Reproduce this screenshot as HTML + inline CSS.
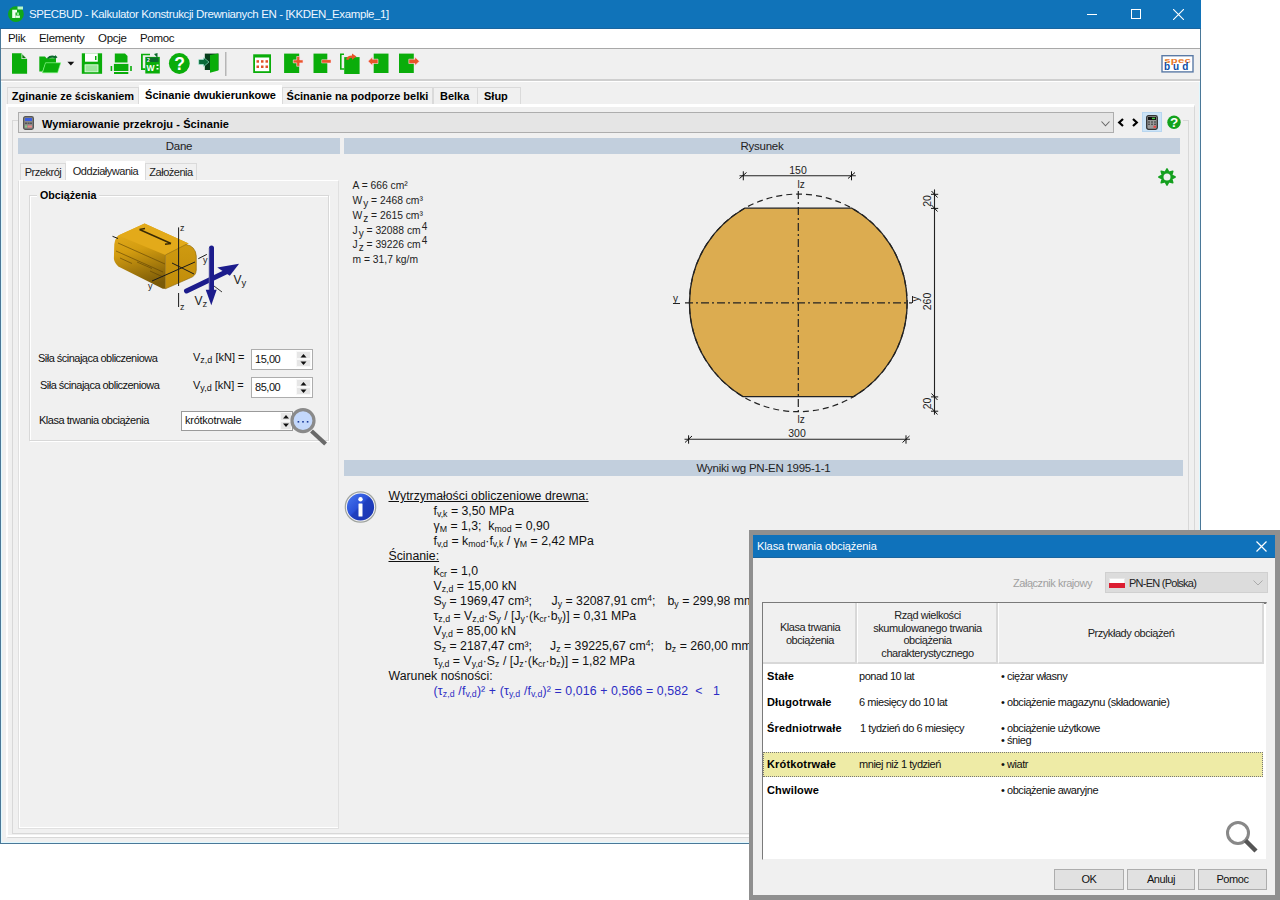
<!DOCTYPE html>
<html><head><meta charset="utf-8">
<style>
*{margin:0;padding:0;box-sizing:border-box}
html,body{width:1280px;height:900px;overflow:hidden;background:#fff;font-family:"Liberation Sans",sans-serif;color:#000}
.a{position:absolute}
.tx{position:absolute;white-space:nowrap}
#win{left:0;top:0;width:1201px;height:844px;background:#f0f0f0;border:1px solid #4a7898;border-top:none;box-shadow:inset 1px 0 0 #dff8ff,inset -1px 0 0 #dff8ff,inset 0 -1px 0 #dff8ff}
#title{left:0;top:0;width:1201px;height:29px;background:#1073b9;border-bottom:1px solid #1a659f;color:#fff}
#menu{left:1px;top:29px;width:1199px;height:20px;background:#fff;border-bottom:1px solid #a8a8a8}
#tb{left:1px;top:49px;width:1199px;height:32px;background:#f0f0f0;border-bottom:2px solid #cfcfcf}
.hbar{position:absolute;background:#c2cfdd;height:16px;font-size:11.5px;letter-spacing:-0.25px;color:#222;text-align:center;line-height:16px}
.tab{position:absolute;font-weight:bold;font-size:11px;background:#f0f0f0;border:1px solid #dadada;border-bottom:none;line-height:17px;text-align:center;color:#000;white-space:nowrap}
.stab{position:absolute;font-size:11px;letter-spacing:-0.47px;background:#f0f0f0;border:1px solid #dadada;border-bottom:none;line-height:16px;text-align:center;color:#222;white-space:nowrap}
.res{font-size:12.3px;color:#111;line-height:15px}
.res sub{font-size:8.8px;vertical-align:baseline;position:relative;top:2px}
.res sup{font-size:8.5px;vertical-align:baseline;position:relative;top:-4px}
.btn{position:absolute;background:#e1e1e1;border:1px solid #adadad;font-size:11px;letter-spacing:-0.4px;text-align:center;line-height:18px;color:#111}
.dt{font-size:11px;color:#111;letter-spacing:-0.45px}
.db{font-size:11px;font-weight:bold;color:#000;letter-spacing:0.15px}
</style></head><body>
<div id="win" class="a"></div>
<div id="title" class="a">
  <svg class="a" style="left:6px;top:4px" width="20" height="20" viewBox="6 4 20 20"><circle cx="15.9" cy="14.1" r="7.9" fill="#10a818"/><path d="M12.2 9.7 H17 V12.5 H15.5 V17.9 H12.2 Z" fill="#f0fff0"/><path d="M15.5 15.5 H19.9 V17.9 H15.5 Z" fill="#e8ffe8"/><rect x="16.8" y="12.5" width="2.2" height="2.5" fill="#8ef08e"/><rect x="17.5" y="6.5" width="5.5" height="3" fill="#b8f8c8"/></svg>
  <div class="tx" style="left:29px;top:8px;font-size:11.5px;letter-spacing:-0.38px;color:#eef6ff">SPECBUD - Kalkulator Konstrukcji Drewnianych EN - [KKDEN_Example_1]</div>
  <div class="a" style="left:1087px;top:14px;width:10px;height:1px;background:#fff"></div>
  <div class="a" style="left:1131px;top:9px;width:10px;height:10px;border:1px solid #fff"></div>
  <svg class="a" style="left:1173px;top:9px" width="11" height="11"><path d="M0 0L11 11M11 0L0 11" stroke="#fff" stroke-width="1.1"/></svg>
</div>
<div id="menu" class="a">
  <div class="tx" style="left:7px;top:3px;font-size:11.5px;letter-spacing:-0.3px;color:#111">Plik</div>
  <div class="tx" style="left:38px;top:3px;font-size:11.5px;letter-spacing:-0.3px;color:#111">Elementy</div>
  <div class="tx" style="left:97px;top:3px;font-size:11.5px;letter-spacing:-0.3px;color:#111">Opcje</div>
  <div class="tx" style="left:139px;top:3px;font-size:11.5px;letter-spacing:-0.3px;color:#111">Pomoc</div>
</div>
<div id="tb" class="a"></div>
<!-- TOOLBAR -->
<svg class="a" style="left:0;top:0" width="440" height="82" viewBox="0 0 440 82">
<g fill="#0aad0a">
<!-- new doc -->
<path d="M12 53.3 H21.5 L27.1 59 V73.8 H12 Z"/>
<path d="M21.5 53.3 V59 H27.1 Z" fill="#f0f0f0"/>
<path d="M22.3 54.5 L26 58.2 H22.3 Z" fill="#0a7a0a"/>
<!-- open folder -->
<path d="M39.3 56.6 H45 L46.5 58.2 H56 V62.8 H45.5 L42.4 71.5 H39.3 Z"/>
<path d="M45.5 62.8 H60.7 L57.6 72.8 H42.4 Z" stroke="#7cfc7c" stroke-width="0.6"/>
<path d="M47 58 Q50 54.5 55 56 L55 55 L57.5 57.3 L54.5 59.2 L54.8 58 Q51 57 48 59 Z" fill="#0a6a2a"/>
<!-- floppy -->
<path d="M81.8 53.3 H102.1 V73.8 H81.8 Z"/>
<rect x="85" y="53.3" width="12.8" height="8.4" fill="#fff"/>
<rect x="95" y="56" width="1.5" height="4" fill="#0aad0a"/>
<rect x="85" y="64.8" width="13" height="7" fill="#9be59b" stroke="#eaffea" stroke-width="0.8"/>
<!-- printer -->
<path d="M114.8 53.6 H125 L127.5 56 V62.5 H114.8 Z"/>
<rect x="113.9" y="63.9" width="14.5" height="7.1"/>
<rect x="110.6" y="66" width="1.6" height="5"/>
<rect x="130.2" y="66" width="1.6" height="5"/>
<rect x="114" y="72" width="14.3" height="2"/>
<!-- word -->
<path d="M141 53.8 H150 V55.3 H142.8 V68.3 H145.3 V70 H141 Z"/>
<rect x="145.3" y="56.9" width="14.5" height="16.6"/>
<rect x="146.5" y="57.5" width="12" height="4.5" fill="#0a6a2a"/>
<path d="M154 54 L157.5 53 V58 Z" fill="#0a6a2a"/>
<text x="147" y="61.5" font-family="Liberation Sans" font-size="5" fill="#fff" font-weight="bold">2</text>
<text x="146.6" y="70.5" font-family="Liberation Sans" font-size="8.5" fill="#fff" font-weight="bold">W</text>
<rect x="156.5" y="64.5" width="2" height="1.5" fill="#fff"/><rect x="156.5" y="68" width="2" height="1.5" fill="#fff"/>
<!-- help -->
<circle cx="179.3" cy="63.5" r="10.4"/>
<text x="179.5" y="70" font-family="Liberation Sans" font-size="17.5" font-weight="bold" fill="#fff" text-anchor="middle">?</text>
<!-- exit -->
<rect x="204.8" y="53.6" width="13.6" height="16.4" fill="#053d1a"/>
<path d="M210 55 L218.4 53.6 V70.5 L210 72.8 Z"/>
<path d="M198.7 59.5 H203.5 V57.4 L209 62 L203.5 66.7 V64.5 H198.7 Z" fill="#0a6a3a" stroke="#bfe" stroke-width="0.5"/>
</g>
<rect x="225.2" y="52" width="1.2" height="24" fill="#a8a8a8"/>
<g fill="#0aad0a">
<!-- calendar -->
<rect x="253.2" y="54.3" width="17.8" height="18.7"/>
<rect x="255" y="57.5" width="14.2" height="13.7" fill="#fff"/>
<g fill="#e0522a"><rect x="256.5" y="60.2" width="2.5" height="2.5"/><rect x="261" y="60.2" width="2.5" height="2.5"/><rect x="265.5" y="60.2" width="2.5" height="2.5"/><rect x="256.5" y="65.5" width="2.5" height="2.5"/><rect x="261" y="65.5" width="2.5" height="2.5"/><rect x="265.5" y="65.5" width="2.5" height="2.5"/></g>
<!-- doc+ -->
<rect x="284.1" y="53.6" width="15.1" height="19.4"/>
<path d="M296.7 56.5 H299.7 V59.9 H303 V62.9 H299.7 V66.3 H296.7 V62.9 H293.3 V59.9 H296.7 Z" fill="#e8562a" stroke="#fde" stroke-width="0.6"/>
<!-- doc- -->
<rect x="313.5" y="53.6" width="13.8" height="19.4"/>
<rect x="321.8" y="59.8" width="9.2" height="3.2" fill="#e8562a" stroke="#fde" stroke-width="0.5"/>
<!-- copy -->
<path d="M340 53.6 H344 V55 H341.6 V68.3 H344.2 V69.8 H340 Z"/>
<rect x="344.2" y="57.1" width="15.4" height="16.9"/>
<path d="M346 59.5 Q347 55.5 352 55.5 V53.4 L356.5 56.6 L352 59.8 V57.8 Q349 57.8 348.3 60 Z" fill="#e8562a"/>
<!-- arrow left -->
<rect x="373.7" y="53.6" width="14.8" height="19.4"/>
<path d="M368 61.3 L372.5 57 V59.2 H378 V63.5 H372.5 V65.6 Z" fill="#e8562a" stroke="#fde" stroke-width="0.6"/>
<!-- arrow right -->
<rect x="399" y="53.6" width="14.8" height="19.4"/>
<path d="M419.4 61.3 L414.9 57 V59.2 H408.8 V63.5 H414.9 V65.6 Z" fill="#e8562a" stroke="#fde" stroke-width="0.6"/>
</g>
<path d="M67.4 61.7 H74.3 L70.85 65.6 Z" fill="#111"/>
</svg>
<!-- specbud logo -->
<svg class="a" style="left:1161px;top:55px" width="33" height="18" viewBox="0 0 33 18">
<rect x="1" y="0.7" width="31" height="16.2" fill="#fff" stroke="#5a7aa6" stroke-width="1.4"/>
<text x="3.2" y="7.8" font-family="Liberation Sans" font-weight="bold" font-size="8" fill="#e8782a" letter-spacing="0.2" textLength="27" lengthAdjust="spacingAndGlyphs">spec</text>
<text x="3" y="14.6" font-family="Liberation Sans" font-weight="bold" font-size="10" fill="#0b4ea8" letter-spacing="3">bud</text>
</svg>
<!-- TABS -->
<div class="a" style="left:1px;top:81px;width:1199px;height:1px;background:#fff"></div>
<div class="a" style="left:6px;top:104px;width:1189px;height:734px;background:#f0f0f0;border-left:2px solid #fff;border-top:3px solid #fff;border-right:1px solid #d8d8d8;border-bottom:1px solid #d8d8d8"></div>
<div class="a" style="left:8px;top:835px;width:1186px;height:2px;background:#fff"></div>
<div class="tab" style="left:7px;top:87px;width:132px;height:17px">Zginanie ze ściskaniem</div>
<div class="tab" style="left:139px;top:85px;width:143px;height:20px;background:#fff;border-color:#fff;line-height:18px">Ścinanie dwukierunkowe</div>
<div class="tab" style="left:282px;top:87px;width:151px;height:17px">Ścinanie na podporze belki</div>
<div class="tab" style="left:433px;top:87px;width:45px;height:17px;text-align:left;padding-left:6px">Belka</div>
<div class="tab" style="left:477px;top:87px;width:44px;height:17px;text-align:left;padding-left:6px">Słup</div>

<!-- inner panel -->
<div class="a" style="left:12px;top:120px;width:1177px;height:714px;background:#f0f0f0;border:1px solid #d8d8d8"></div>
<div class="a" style="left:1113px;top:118px;width:70px;height:4px;background:#f0f0f0"></div>
<div class="a" style="left:18px;top:112px;width:1096px;height:21px;background:#e5e5e5;border:1px solid #adadad"></div>
<svg class="a" style="left:23px;top:116px" width="11" height="14" viewBox="0 0 11 14"><rect x="0.6" y="0.6" width="9.8" height="12.8" rx="1.8" fill="#8a8a8a" stroke="#555" stroke-width="1.2"/><rect x="2" y="2" width="7" height="3" fill="#3a5ee0"/><g fill="#555"><rect x="2" y="6.5" width="2" height="1.5"/><rect x="4.6" y="6.5" width="2" height="1.5"/><rect x="7" y="6.5" width="2" height="1.5"/></g><g fill="#8c8"><rect x="2" y="9.5" width="2" height="2"/></g><rect x="4.6" y="9.5" width="4.4" height="2" fill="#e88"/></svg>
<div class="tx" style="left:42px;top:117.5px;font-size:11px;font-weight:bold;letter-spacing:0.08px">Wymiarowanie przekroju - Ścinanie</div>
<svg class="a" style="left:1101px;top:120.5px" width="9" height="6"><path d="M0.5 0.5L4.5 4.8L8.5 0.5" fill="none" stroke="#666" stroke-width="1.1"/></svg>
<svg class="a" style="left:1117px;top:118px" width="8" height="9"><path d="M6 1L2.2 4.5L6 8" fill="none" stroke="#000" stroke-width="2.2"/></svg>
<svg class="a" style="left:1131px;top:118px" width="8" height="9"><path d="M2 1L5.8 4.5L2 8" fill="none" stroke="#000" stroke-width="2.2"/></svg>
<div class="a" style="left:1142px;top:112px;width:20px;height:20px;background:#cce4f7;border:1px solid #b8d6f0"></div>
<svg class="a" style="left:1146px;top:115px" width="12" height="15" viewBox="0 0 12 15"><rect x="0.7" y="0.7" width="10.6" height="13.6" rx="1.8" fill="#9a9a9a" stroke="#333" stroke-width="1.3"/><rect x="2" y="2" width="8" height="3" fill="#111"/><rect x="6" y="2.7" width="3" height="1.4" fill="#4c4"/><g fill="#555"><rect x="2" y="6.3" width="2" height="1.4"/><rect x="5" y="6.3" width="2" height="1.4"/><rect x="8" y="6.3" width="2" height="1.4"/><rect x="2" y="8.6" width="2" height="1.4"/><rect x="5" y="8.6" width="2" height="1.4"/><rect x="8" y="8.6" width="2" height="1.4"/></g><rect x="7.5" y="10.8" width="2.5" height="2" fill="#e44"/></svg>
<svg class="a" style="left:1167px;top:115px" width="14" height="14" viewBox="0 0 14 14"><circle cx="7" cy="7.3" r="6.7" fill="#13a21c"/><text x="7" y="12.2" font-family="Liberation Sans" font-weight="bold" font-size="13.5" fill="#fff" text-anchor="middle">?</text></svg>

<div class="hbar" style="left:18px;top:138px;width:322px">Dane</div>
<div class="hbar" style="left:344px;top:138px;width:836px">Rysunek</div>

<!-- left subtabs -->
<div class="a" style="left:18px;top:180px;width:321px;height:649px;background:#f0f0f0;border:1px solid #e0e0e0;border-top:1px solid #fff;box-shadow:inset 1px 0 0 #fff,inset 0 -1px 0 #fff"></div>
<div class="stab" style="left:20px;top:163px;width:46px;height:17px">Przekrój</div>
<div class="stab" style="left:66px;top:161px;width:79px;height:20px;background:#fff;border-color:#fff;line-height:18px">Oddziaływania</div>
<div class="stab" style="left:145px;top:163px;width:52px;height:17px">Założenia</div>
<!-- groupbox -->
<div class="a" style="left:29px;top:195px;width:300px;height:246px;border:1px solid #d8d8d8;box-shadow:inset 1px 1px 0 #fff,1px 1px 0 #fff"></div>
<div class="tx" style="left:37px;top:189px;font-size:10.7px;font-weight:bold;background:#f0f0f0;padding:0 3px">Obciążenia</div>
<svg class="a" style="left:0;top:0" width="340" height="330" viewBox="0 0 340 330">
<defs>
<linearGradient id="bs" x1="0" y1="0" x2="0.3" y2="1"><stop offset="0" stop-color="#e8b020"/><stop offset="0.45" stop-color="#d39c10"/><stop offset="1" stop-color="#7a5a08"/></linearGradient>
<linearGradient id="bf" x1="0" y1="0" x2="0" y2="1"><stop offset="0" stop-color="#cf9a10"/><stop offset="1" stop-color="#c08c0a"/></linearGradient>
</defs>
<!-- body -->
<path d="M144.6 223.4 L188.6 243.4 L165.4 255 L165.4 288.8 L162.8 288.8 L118.3 266.6 Q113.5 262 113.9 257.7 L114.3 244.3 Q115 238 118.3 235.4 Z" fill="url(#bs)"/>
<path d="M144.6 223.4 L188.6 243.4 L165.4 255 L118.3 235.4 Z" fill="#e3aa1a"/>
<path d="M165.4 255 L186 244.5 Q195.5 246 196.3 256 L196.3 270 Q196 276 190 278 L165.4 288.8 Z" fill="url(#bf)" stroke="#8a6408" stroke-width="0.6"/>
<g stroke="#5a4006" stroke-width="0.8" opacity="0.75">
<path d="M118 243 L165 264"/><path d="M116 251 L163 272"/><path d="M120 258 L132 263.5"/><path d="M137 262 L152 268.5"/><path d="M150 271 L163 277"/>
</g>
<path d="M139.5 229.5 L171 243.5 M139.5 229.5 L145 228.5 M171 243.5 L165 244.3" stroke="#3a2a05" stroke-width="1.5" fill="none"/>
<!-- axes -->
<g stroke="#1a1a1a" stroke-width="1" fill="none">
<path d="M178.6 227.4 V286 M178.6 293 V307"/>
<path d="M112.5 236.3 L118 238.5"/>
<path d="M152 281 L195 262 M198.3 258.7 L206.8 254.4"/>
<path d="M172 263 L194 274"/>
</g>
<g font-family="Liberation Sans" font-size="9" fill="#222">
<text x="180" y="231">z</text>
<text x="180" y="310">z</text>
<text x="203" y="263">y</text>
<text x="148" y="289">y</text>
</g>
<!-- blue arrows -->
<path d="M186.5 291 L226 272" stroke="#1c1c8c" stroke-width="5" stroke-linecap="round"/>
<path d="M239.1 263.7 L217.3 267.6 L229.8 275.8 Z" fill="#1c1c8c"/>
<path d="M211.5 248 V292" stroke="#1c1c8c" stroke-width="5" stroke-linecap="round"/>
<path d="M209.2 248 V290" stroke="#7070b0" stroke-width="0.8"/>
<path d="M211.3 305.3 L205.7 289.8 L216.7 289.8 Z" fill="#1c1c8c"/>
<path d="M214 286 L222 292" stroke="#222" stroke-width="0.9"/>
<g font-family="Liberation Sans" font-size="12" fill="#222">
<text x="233.5" y="283.5">V</text><text x="241.5" y="286" font-size="9.5">y</text>
<text x="194.5" y="304.5">V</text><text x="202.5" y="307" font-size="9.5">z</text>
</g>
</svg>


<div class="tx" style="left:38px;top:352px;font-size:11px;letter-spacing:-0.52px;color:#111">Siła ścinająca obliczeniowa</div>
<div class="tx" style="left:193px;top:351px;font-size:11px;color:#111">V<sub style="font-size:9px;vertical-align:-2px">z,d</sub> [kN] =</div>
<div class="a" style="left:251px;top:349px;width:62px;height:21px;background:#fff;border:1px solid #adadad"></div>
<div class="tx" style="left:255px;top:353px;font-size:11px;letter-spacing:-0.47px;color:#111">15,00</div>
<div class="tx" style="left:40px;top:379px;font-size:11px;letter-spacing:-0.52px;color:#111">Siła ścinająca obliczeniowa</div>
<div class="tx" style="left:193px;top:379px;font-size:11px;color:#111">V<sub style="font-size:9px;vertical-align:-2px">y,d</sub> [kN] =</div>
<div class="a" style="left:251px;top:377px;width:62px;height:21px;background:#fff;border:1px solid #adadad"></div>
<div class="tx" style="left:255px;top:381px;font-size:11px;letter-spacing:-0.47px;color:#111">85,00</div>
<div class="tx" style="left:39px;top:414px;font-size:11px;letter-spacing:-0.49px;color:#111">Klasa trwania obciążenia</div>
<div class="a" style="left:181px;top:411px;width:112px;height:20px;background:#fff;border:1px solid #9a9a9a"></div>
<div class="tx" style="left:185px;top:414px;font-size:11px;letter-spacing:-0.25px;color:#111">krótkotrwałe</div>
<div class="a" style="left:296px;top:351px;width:15px;height:8px;background:#e6e6e6;border:1px solid #f8f8f8"></div>
<div class="a" style="left:296px;top:359px;width:15px;height:8px;background:#e6e6e6;border:1px solid #f8f8f8"></div>
<div class="a" style="left:296px;top:379px;width:15px;height:8px;background:#e6e6e6;border:1px solid #f8f8f8"></div>
<div class="a" style="left:296px;top:387px;width:15px;height:8px;background:#e6e6e6;border:1px solid #f8f8f8"></div>
<div class="a" style="left:280px;top:412px;width:12px;height:9px;background:#e6e6e6;border:1px solid #f8f8f8"></div>
<div class="a" style="left:280px;top:421px;width:12px;height:9px;background:#e6e6e6;border:1px solid #f8f8f8"></div>
<svg class="a" style="left:0;top:0" width="340" height="450" viewBox="0 0 340 450">
<g fill="#111">
<path d="M300.5 357.5 L303.5 354 L306.5 357.5 Z"/><path d="M300.5 361.5 L303.5 365 L306.5 361.5 Z"/>
<path d="M300.5 385.5 L303.5 382 L306.5 385.5 Z"/><path d="M300.5 389.5 L303.5 393 L306.5 389.5 Z"/>
<path d="M283 418.5 L286 415 L289 418.5 Z"/><path d="M283 423.5 L286 427 L289 423.5 Z"/>
</g>
<path d="M311.5 431 L325.6 444" stroke="#6a6a6a" stroke-width="4.2"/>
<circle cx="303" cy="420.7" r="11" fill="#c4d8fb" stroke="#8a8a8a" stroke-width="3.2"/>
<g fill="#1a3a9a"><rect x="297.6" y="421" width="1.6" height="1.6"/><rect x="302.2" y="421" width="1.6" height="1.6"/><rect x="306.8" y="421" width="1.6" height="1.6"/></g>
</svg>


<!-- drawing -->
<div class="a" style="left:0;top:0;font-size:10.3px;color:#222">
<div class="tx" style="left:352.5px;top:180px">A = 666 cm²</div>
<div class="tx" style="left:352.5px;top:195px">W<span style="position:relative;top:3px;font-size:10px;margin-left:1px">y</span> = 2468 cm³</div>
<div class="tx" style="left:352.5px;top:209.5px">W<span style="position:relative;top:3px;font-size:10px;margin-left:1px">z</span> = 2615 cm³</div>
<div class="tx" style="left:352.5px;top:224.5px">J<span style="position:relative;top:3px;font-size:10px;margin-left:1px">y</span> = 32088 cm<span style="position:relative;top:-4px;font-size:10px;margin-left:1px">4</span></div>
<div class="tx" style="left:352.5px;top:239px">J<span style="position:relative;top:3px;font-size:10px;margin-left:1px">z</span> = 39226 cm<span style="position:relative;top:-4px;font-size:10px;margin-left:1px">4</span></div>
<div class="tx" style="left:352.5px;top:254px">m = 31,7 kg/m</div>
</div>
<svg class="a" style="left:0;top:0" width="1280" height="900" viewBox="0 0 1280 900">
<g font-family="Liberation Sans" font-size="10.5" fill="#222">
<path d="M744.7 208.2 L851.9 208.2 A108.8 108.8 0 0 1 853.6 396.6 L743.0 396.6 A108.8 108.8 0 0 1 744.7 208.2 Z" fill="#dcac50" stroke="#222" stroke-width="1.3"/>
<circle cx="798.3" cy="302.9" r="108.8" fill="none" stroke="#222" stroke-width="1.2" stroke-dasharray="6 4"/>
<path d="M798.3 191 V413" stroke="#222" stroke-width="1.2" stroke-dasharray="8 3 2 3"/>
<path d="M685 302.9 H912" stroke="#222" stroke-width="1.2" stroke-dasharray="8 3 2 3"/>
<!-- dim 150 -->
<path d="M739.5 175.7 H855.8" stroke="#222" stroke-width="1.1"/>
<path d="M743.3 171.3 V180.3 M739.5 178.5 L746.5 172.5 M851.5 171.3 V180.3 M848 178.5 L855 172.5" stroke="#111" stroke-width="1"/>
<text x="798" y="173.5" text-anchor="middle">150</text>
<text x="797.5" y="187.5" font-size="10">lz</text>
<text x="797.5" y="423" font-size="10">lz</text>
<!-- dim 300 -->
<path d="M684.5 439.2 H910" stroke="#222" stroke-width="1.1"/>
<path d="M688.6 435.3 V443.7 M685 442.5 L692 436 M906 435.3 V443.7 M902.5 442.5 L909.5 436" stroke="#111" stroke-width="1"/>
<text x="797" y="436.5" text-anchor="middle">300</text>
<!-- vertical dim -->
<path d="M934.5 189.4 V414.7" stroke="#222" stroke-width="1.1"/>
<path d="M931 194.3 H938.2 M931 208.4 H938.2 M931 396.9 H938.2 M931 411.2 H938.2 M931.5 191 L937.5 197.5 M931.5 205 L937.5 211.5 M931.5 393.5 L937.5 400 M931.5 408 L937.5 414.5" stroke="#111" stroke-width="1"/>
<text transform="translate(930.5,301.5) rotate(-90)" text-anchor="middle">260</text>
<text transform="translate(930.5,201) rotate(-90)" text-anchor="middle">20</text>
<text transform="translate(930.5,403.5) rotate(-90)" text-anchor="middle">20</text>
<!-- y labels -->
<text x="673" y="302" font-size="10">y</text>
<path d="M673 303.5 H680" stroke="#222" stroke-width="1"/>
<text transform="translate(919,299) rotate(-90)" text-anchor="middle" font-size="10">y</text>
<path d="M912.5 296 V303" stroke="#222" stroke-width="1"/>
</g>
</svg>
<svg class="a" style="left:1157.3px;top:167.15px" width="20" height="20" viewBox="-10 -10 20 20"><path d="M0.00 -8.20 L1.95 -4.71 L5.80 -5.80 L4.71 -1.95 L8.20 0.00 L4.71 1.95 L5.80 5.80 L1.95 4.71 L0.00 8.20 L-1.95 4.71 L-5.80 5.80 L-4.71 1.95 L-8.20 0.00 L-4.71 -1.95 L-5.80 -5.80 L-1.95 -4.71Z" fill="#16a020" stroke="#16a020" stroke-width="1.5" stroke-linejoin="round"/><circle r="3.5" fill="#f0f0f0"/></svg>


<div class="hbar" style="left:344px;top:460px;width:839px">Wyniki wg PN-EN 1995-1-1</div>
<svg class="a" style="left:344px;top:491px" width="33" height="33" viewBox="0 0 33 33"><defs><linearGradient id="ig" x1="0" y1="0" x2="1" y2="1"><stop offset="0" stop-color="#4a7af0"/><stop offset="0.45" stop-color="#2a50d8"/><stop offset="0.5" stop-color="#1f3fbf"/><stop offset="1" stop-color="#1a34b0"/></linearGradient></defs><circle cx="16.5" cy="16" r="15.2" fill="#f4f4f4" stroke="#a0a4a0" stroke-width="1.2"/><circle cx="16.5" cy="16" r="13.6" fill="url(#ig)"/><circle cx="16.5" cy="8.3" r="2.2" fill="#fff"/><rect x="14.5" y="12.5" width="4" height="13" rx="0.5" fill="#fff"/></svg>
<div class="a res" style="left:0;top:0">
<div class="tx" style="left:388.5px;top:489px;text-decoration:underline">Wytrzymałości obliczeniowe drewna:</div>
<div class="tx" style="left:433.5px;top:504px">f<sub>v,k</sub> = 3,50 MPa</div>
<div class="tx" style="left:433.5px;top:519px">γ<sub>M</sub> = 1,3;&nbsp; k<sub>mod</sub> = 0,90</div>
<div class="tx" style="left:433.5px;top:534px">f<sub>v,d</sub> = k<sub>mod</sub>·f<sub>v,k</sub> / γ<sub>M</sub> = 2,42 MPa</div>
<div class="tx" style="left:388.5px;top:549px;text-decoration:underline">Ścinanie:</div>
<div class="tx" style="left:433.5px;top:564px">k<sub>cr</sub> = 1,0</div>
<div class="tx" style="left:433.5px;top:579px">V<sub>z,d</sub> = 15,00 kN</div>
<div class="tx" style="left:433.5px;top:594px">S<sub>y</sub> = 1969,47 cm³;</div>
<div class="tx" style="left:551.5px;top:594px">J<sub>y</sub> = 32087,91 cm<sup>4</sup>;</div>
<div class="tx" style="left:667.5px;top:594px">b<sub>y</sub> = 299,98 mm</div>
<div class="tx" style="left:433.5px;top:609px">τ<sub>z,d</sub> = V<sub>z,d</sub>·S<sub>y</sub> / [J<sub>y</sub>·(k<sub>cr</sub>·b<sub>y</sub>)] = 0,31 MPa</div>
<div class="tx" style="left:433.5px;top:624px">V<sub>y,d</sub> = 85,00 kN</div>
<div class="tx" style="left:433.5px;top:639px">S<sub>z</sub> = 2187,47 cm³;</div>
<div class="tx" style="left:550px;top:639px">J<sub>z</sub> = 39225,67 cm<sup>4</sup>;</div>
<div class="tx" style="left:665px;top:639px">b<sub>z</sub> = 260,00 mm</div>
<div class="tx" style="left:433.5px;top:654px">τ<sub>y,d</sub> = V<sub>y,d</sub>·S<sub>z</sub> / [J<sub>z</sub>·(k<sub>cr</sub>·b<sub>z</sub>)] = 1,82 MPa</div>
<div class="tx" style="left:388.5px;top:669px">Warunek nośności:</div>
<div class="tx" style="left:433.5px;top:684px;color:#2c2cc4;letter-spacing:0.12px">(τ<sub>z,d</sub> /f<sub>v,d</sub>)² + (τ<sub>y,d</sub> /f<sub>v,d</sub>)² = 0,016 + 0,566 = 0,582 &nbsp;&lt; &nbsp; 1</div>
</div>


<!-- dialog -->
<div class="a" style="left:749px;top:530px;width:531px;height:370px;background:#8f8f8f"></div>
<div class="a" style="left:753px;top:535px;width:522px;height:360px;background:#f0f0f0"></div>
<div class="a" style="left:753px;top:535px;width:522px;height:23px;background:#0f72bb;border-bottom:1px solid #1a659f"></div>
<div class="tx" style="left:757px;top:540px;font-size:11px;letter-spacing:-0.08px;color:#fff">Klasa trwania obciążenia</div>
<svg class="a" style="left:1256px;top:541px" width="11" height="11"><path d="M0.5 0.5L10.5 10.5M10.5 0.5L0.5 10.5" stroke="#fff" stroke-width="1.2"/></svg>
<div class="tx" style="left:1013px;top:577px;font-size:11px;letter-spacing:-0.46px;color:#a0a0a0">Załącznik krajowy</div>
<div class="a" style="left:1105px;top:572px;width:163px;height:21px;background:#dcdcdc;border:1px solid #d0d0d0"></div>
<div class="a" style="left:1109px;top:578px;width:16px;height:5px;background:#fff;border:1px solid #e8e8e8;border-bottom:none"></div>
<div class="a" style="left:1109px;top:583px;width:16px;height:5px;background:#dc1e32"></div>
<div class="tx" style="left:1129px;top:577px;font-size:11px;letter-spacing:-0.75px;color:#222">PN-EN (Polska)</div>
<svg class="a" style="left:1253px;top:580px" width="10" height="6"><path d="M0.5 0.5L5 5L9.5 0.5" fill="none" stroke="#aaa" stroke-width="1"/></svg>
<!-- table -->
<div class="a" style="left:762px;top:602px;width:505px;height:258px;background:#fff;border:1px solid #7a7a7a;border-top:2px solid #7a7a7a;border-right:1px solid #f0f0f0;border-bottom:1px solid #f0f0f0"></div>
<div class="a" style="left:763px;top:603px;width:94px;height:61px;background:#f0f0f0;border-right:2px solid #d8d8d8;border-bottom:2px solid #d8d8d8"></div>
<div class="a" style="left:857px;top:603px;width:141px;height:61px;background:#f0f0f0;border-left:1px solid #fff;border-right:2px solid #d8d8d8;border-bottom:2px solid #d8d8d8"></div>
<div class="a" style="left:998px;top:603px;width:266px;height:61px;background:#f0f0f0;border-left:1px solid #fff;border-right:2px solid #d8d8d8;border-bottom:2px solid #d8d8d8"></div>
<div class="tx dt" style="left:763px;top:621px;width:94px;text-align:center;line-height:13px;white-space:normal;color:#222">Klasa trwania<br>obciążenia</div>
<div class="tx dt" style="left:857px;top:609px;width:141px;text-align:center;line-height:12.5px;color:#222">Rząd wielkości<br>skumulowanego trwania<br>obciążenia<br>charakterystycznego</div>
<div class="tx dt" style="left:998px;top:627px;width:266px;text-align:center;color:#222">Przykłady obciążeń</div>
<div class="a" style="left:763px;top:752px;width:500px;height:25px;background:#eeeba6;border:1px dotted #777"></div>
<div class="tx db" style="left:767px;top:670px">Stałe</div>
<div class="tx dt" style="left:859px;top:670px">ponad 10 lat</div>
<div class="tx dt" style="left:1001px;top:670px">• ciężar własny</div>
<div class="tx db" style="left:767px;top:696px">Długotrwałe</div>
<div class="tx dt" style="left:859px;top:696px">6 miesięcy do 10 lat</div>
<div class="tx dt" style="left:1001px;top:696px">• obciążenie magazynu (składowanie)</div>
<div class="tx db" style="left:767px;top:722px">Średniotrwałe</div>
<div class="tx dt" style="left:860px;top:722px">1 tydzień do 6 miesięcy</div>
<div class="tx dt" style="left:1001px;top:722px">• obciążenie użytkowe</div>
<div class="tx dt" style="left:1001px;top:734px">• śnieg</div>
<div class="tx db" style="left:767px;top:758px">Krótkotrwałe</div>
<div class="tx dt" style="left:859px;top:758px">mniej niż 1 tydzień</div>
<div class="tx dt" style="left:1001px;top:758px">• wiatr</div>
<div class="tx db" style="left:767px;top:784px">Chwilowe</div>
<div class="tx dt" style="left:1001px;top:784px">• obciążenie awaryjne</div>
<svg class="a" style="left:1224px;top:819px" width="36" height="36" viewBox="0 0 36 36"><circle cx="14" cy="14" r="10.5" fill="none" stroke="#888" stroke-width="3"/><path d="M21.5 21.5L32 32" stroke="#555" stroke-width="4.5" stroke-linecap="butt"/></svg>
<div class="btn" style="left:1054px;top:869px;width:70px;height:21px">OK</div>
<div class="btn" style="left:1127px;top:869px;width:68px;height:21px">Anuluj</div>
<div class="btn" style="left:1198px;top:869px;width:69px;height:21px">Pomoc</div>

</body></html>
